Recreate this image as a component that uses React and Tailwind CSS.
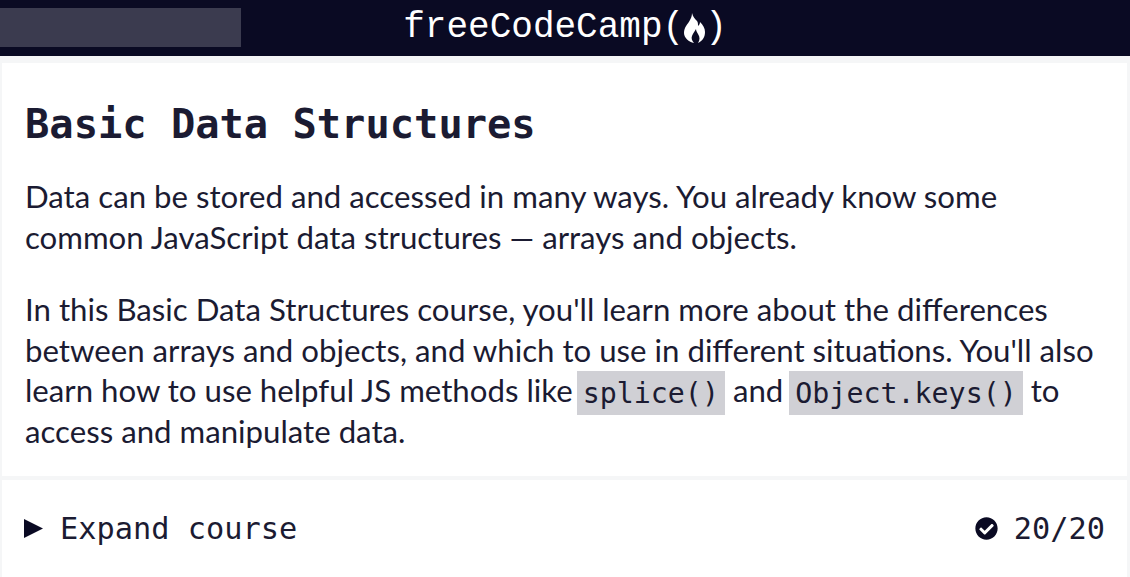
import { FaCheckCircle } from 'react-icons/fa';

const mono = "font-['DejaVu_Sans_Mono',monospace]";

export default function App() {
  return (
    <div className="h-[577px] overflow-hidden bg-[#f5f6f7] font-['Lato',sans-serif] text-[#1b1b32]">
      {/* Nav */}
      <div className="relative h-[56px] bg-[#0a0a23]">
        <div className="absolute left-0 top-[8px] h-[39px] w-[241px] bg-[#3b3b4f]" />
        <div className="flex h-full items-center justify-center font-['Liberation_Mono',monospace] text-[36px] text-white">
          <span>freeCodeCamp(</span>
          <svg viewBox="0 0 21 30" className="mb-[1px] h-[30px] w-[21px]" fill="white">
            <path d="M8 0C9 4 11 6 13 8C14 9 14 11 14 13C15 12 16 11 16 9C19 12 21 15 21 19C21 25 18 28 14 30C16 27 16 24 14 21C13 19 12 18 12 16C11 18 9 20 8 23C7 25 8 28 10 30C5 29 0 25 0 20C0 14 4 11 6 7C7 5 8 3 8 0z" />
          </svg>
          <span>)</span>
        </div>
      </div>

      {/* Intro */}
      <div className="ml-[2px] mr-[3px] mt-[7px] h-[413px] bg-white px-[23px] pt-[39px]">
        <h1 className={`${mono} text-[40.4px] font-bold leading-[44px]`}>Basic Data Structures</h1>
        <div className="mt-[30px] text-[31.2px] leading-[40.6px]">
          <p>Data can be stored and accessed in many ways. You already know some common JavaScript data structures — arrays and objects.</p>
          <p className="mt-[32px]">
            In this Basic Data Structures course, you'll learn more about the differences between arrays and objects, and which to use in different situations. You'll also learn how to use helpful JS methods like{' '}
            <code className={`${mono} -ml-[4px] bg-[#d0d0d5] px-[6px] py-[5.5px] text-[28.3px] leading-none`}>splice()</code> and{' '}
            <code className={`${mono} -ml-[2px] bg-[#d0d0d5] px-[6px] py-[5.5px] text-[28.3px] leading-none`}>Object.keys()</code> to access and manipulate data.
          </p>
        </div>
      </div>

      {/* Expand row */}
      <div className={`${mono} ml-[2px] mr-[3px] mt-[4px] flex h-[97px] items-center justify-between bg-white pl-[22px] pr-[22px] text-[30.3px]`}>
        <div className="flex items-center">
          <svg viewBox="0 0 19 19" className="mr-[17px] h-[19px] w-[19px]" fill="#0a0a23">
            <path d="M0 0l19 9.5L0 19z" />
          </svg>
          <span>Expand course</span>
        </div>
        <div className="flex items-center gap-[16px]">
          <FaCheckCircle className="h-[23px] w-[23px] text-[#0a0a23]" />
          <span>20/20</span>
        </div>
      </div>
    </div>
  );
}
